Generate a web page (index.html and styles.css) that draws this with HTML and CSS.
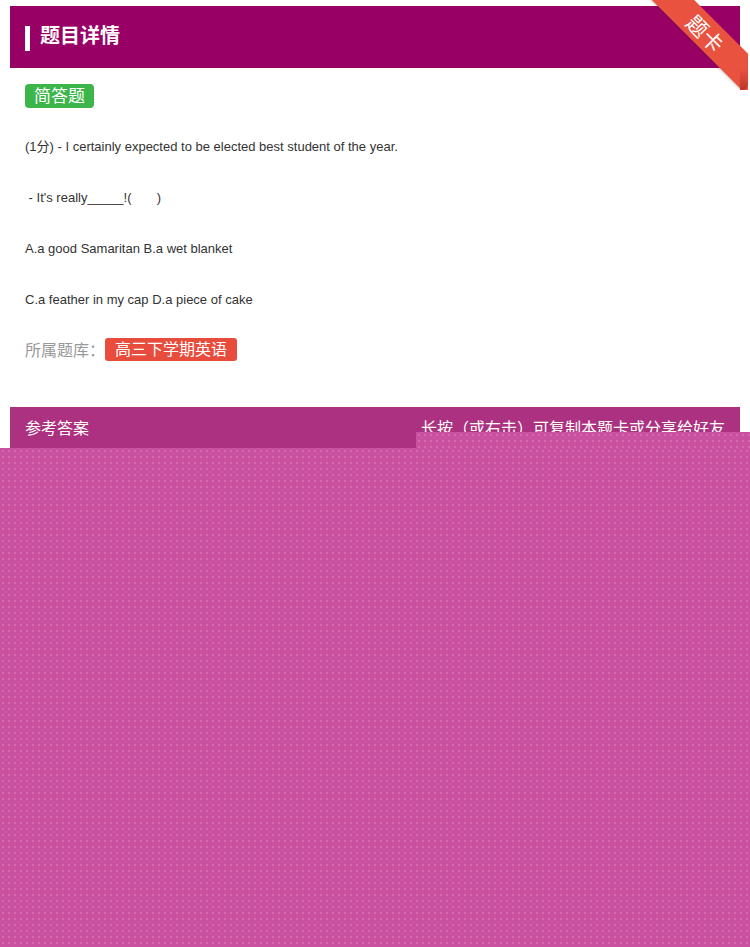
FILE: index.html
```html
<!DOCTYPE html>
<html lang="zh">
<head>
<meta charset="utf-8">
<title>题目详情</title>
<link rel="stylesheet" href="styles.css">
</head>
<body>
<div class="page">
  <div class="head"><span class="head-bar"></span><h1 class="head-title">题目详情</h1></div>
  <div class="content">
    <span class="type-tag">简答题</span>
    <p class="line">(1分) - I certainly expected to be elected best student of the year.</p>
    <p class="line">&nbsp;- It's really_____!(&nbsp;&nbsp;&nbsp;&nbsp;&nbsp;&nbsp;&nbsp;)</p>
    <p class="line">A.a good Samaritan B.a wet blanket</p>
    <p class="line">C.a feather in my cap D.a piece of cake</p>
    <div class="bank"><span class="bank-label">所属题库：</span><span class="bank-tag">高三下学期英语</span></div>
  </div>
  <div class="answer-bar"><span>参考答案</span><span>长按（或右击）可复制本题卡或分享给好友</span></div>
</div>
<div class="ribbon"><div class="ribbon-band">题卡</div><div class="ribbon-fold"></div></div>
<div class="mask mask-top"></div>
<div class="mask mask-main"></div>
</body>
</html>
```
FILE: styles.css
```css
html, body {
  margin: 0;
  padding: 0;
  background: #ffffff;
  font-family: "Liberation Sans", Arial, "Noto Sans CJK SC", sans-serif;
  overflow: hidden;
}
.page {
  padding: 6px 10px 0;
  height: 941px;
}
.head {
  height: 62px;
  box-sizing: border-box;
  background: #990066;
  display: flex;
  align-items: center;
  padding-left: 15px;
}
.head-bar {
  width: 5px;
  height: 25px;
  background: #ffffff;
  margin-right: 10px;
  margin-top: 2px;
}
.head-title {
  margin: 0 0 4px;
  color: #ffffff;
  font-size: 20px;
  font-weight: bold;
  font-family: "Noto Sans CJK SC", sans-serif;
  line-height: 24px;
}
.content {
  padding: 16px 15px 0;
}
.type-tag {
  display: inline-block;
  background: #3cb54a;
  color: #ffffff;
  font-size: 17px;
  line-height: 22px;
  height: 24px;
  padding: 0 9px;
  border-radius: 4px;
  font-family: "Noto Sans CJK SC", sans-serif;
  vertical-align: top;
}
.line {
  margin: 0;
  font-size: 13px;
  line-height: 20px;
  color: #333333;
  margin-top: 31px;
}
.type-tag + .line {
  margin-top: 29px;
}
.bank {
  margin-top: 28px;
  display: flex;
  align-items: center;
  height: 23px;
}
.bank-label {
  color: #999999;
  font-size: 16px;
  font-family: "Noto Sans CJK SC", sans-serif;
  line-height: 21px;
}
.bank-tag {
  background: #e74c3c;
  color: #ffffff;
  font-size: 16px;
  line-height: 21px;
  height: 23px;
  padding: 0 10px;
  border-radius: 3px;
  font-family: "Noto Sans CJK SC", sans-serif;
}
.answer-bar {
  margin-top: 46px;
  height: 43px;
  box-sizing: border-box;
  padding: 0 15px 4px;
  background: #ac3281;
  color: #ffffff;
  font-size: 16px;
  font-family: "Noto Sans CJK SC", sans-serif;
  display: flex;
  justify-content: space-between;
  align-items: center;
}
.ribbon {
  position: absolute;
  top: 0;
  right: 2px;
  width: 100px;
  height: 90px;
  overflow: hidden;
}
.ribbon-band {
  position: absolute;
  left: -30px;
  top: 15px;
  width: 170px;
  height: 30px;
  background: #e8523f;
  color: #ffffff;
  font-size: 21px;
  line-height: 30px;
  text-align: center;
  text-indent: 8px;
  font-family: "Noto Sans CJK SC", sans-serif;
  transform: rotate(45deg);
  box-shadow: 0 1px 3px rgba(0,0,0,0.2);
}
.ribbon-fold {
  position: absolute;
  right: 0;
  bottom: 0;
  width: 8px;
  height: 20px;
  background: linear-gradient(180deg, #e8523f 0%, #b8382a 100%);
  border-bottom-right-radius: 6px;
}
.mask {
  position: absolute;
  background-color: #c9519f;
  background-image: radial-gradient(circle, #d36aae 0.9px, transparent 1.1px);
  background-size: 6px 6px;
}
.mask-top {
  left: 416px;
  top: 432px;
  right: 0;
  height: 16px;
}
.mask-main {
  left: 0;
  top: 448px;
  right: 0;
  bottom: 0;
}
```
